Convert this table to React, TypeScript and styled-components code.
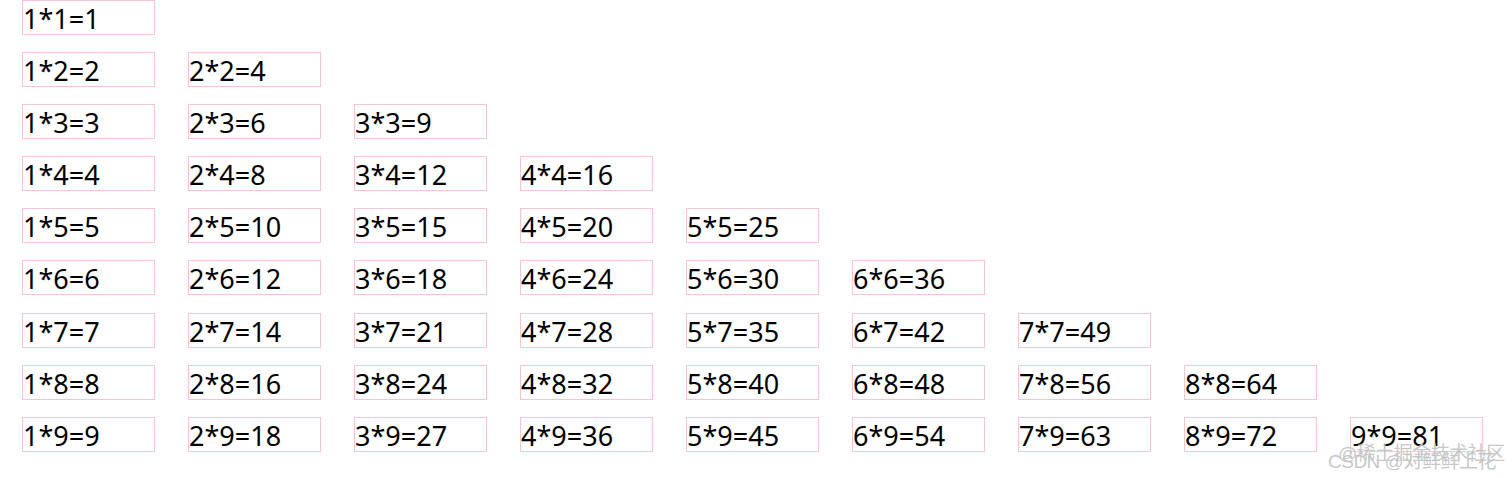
import styled, { createGlobalStyle } from "styled-components"

const GlobalStyle = createGlobalStyle`
    html, body {
        margin: 0;
        padding: 0;
        background: #ffffff;
    }
`

const Page = styled.div`
    position: relative;
    width: 1512px;
    height: 478px;
    overflow: hidden;
    padding-left: 22px;
    box-sizing: border-box;
    font-family: "Noto Sans", "Liberation Sans", sans-serif;
    color: #000000;
`

const Row = styled.div`
    display: flex;
    gap: 33px;
    margin-bottom: 17.1px;
`

const Cell = styled.div`
    box-sizing: border-box;
    width: 133px;
    height: 35px;
    border: 1px solid #f7c5d0;
    font-size: 27px;
    line-height: 36px;
    white-space: nowrap;
    overflow: visible;
`

const Watermark = styled.div<{ $top: number; $left: number }>`
    position: absolute;
    top: ${(p) => p.$top}px;
    left: ${(p) => p.$left}px;
    font-family: "Liberation Sans", "Noto Sans CJK SC", sans-serif;
    font-size: 19px;
    color: rgba(150, 150, 150, 0.55);
    text-shadow: 0 0 1px rgba(255, 255, 255, 0.9);
    white-space: nowrap;
    letter-spacing: -0.5px;
`

const rows = [1, 2, 3, 4, 5, 6, 7, 8, 9]

const App = () => {
    return (
        <Page>
            <GlobalStyle />
            {rows.map((i) => (
                <Row key={i}>
                    {rows
                        .filter((j) => j <= i)
                        .map((j) => (
                            <Cell key={j}>
                                {j}*{i}={i * j}
                            </Cell>
                        ))}
                </Row>
            ))}
            <Watermark $top={438} $left={1338}>
                @稀土掘金技术社区
            </Watermark>
            <Watermark $top={446} $left={1328}>
                CSDN @对鲜鲜上花
            </Watermark>
        </Page>
    )
}

export default App
